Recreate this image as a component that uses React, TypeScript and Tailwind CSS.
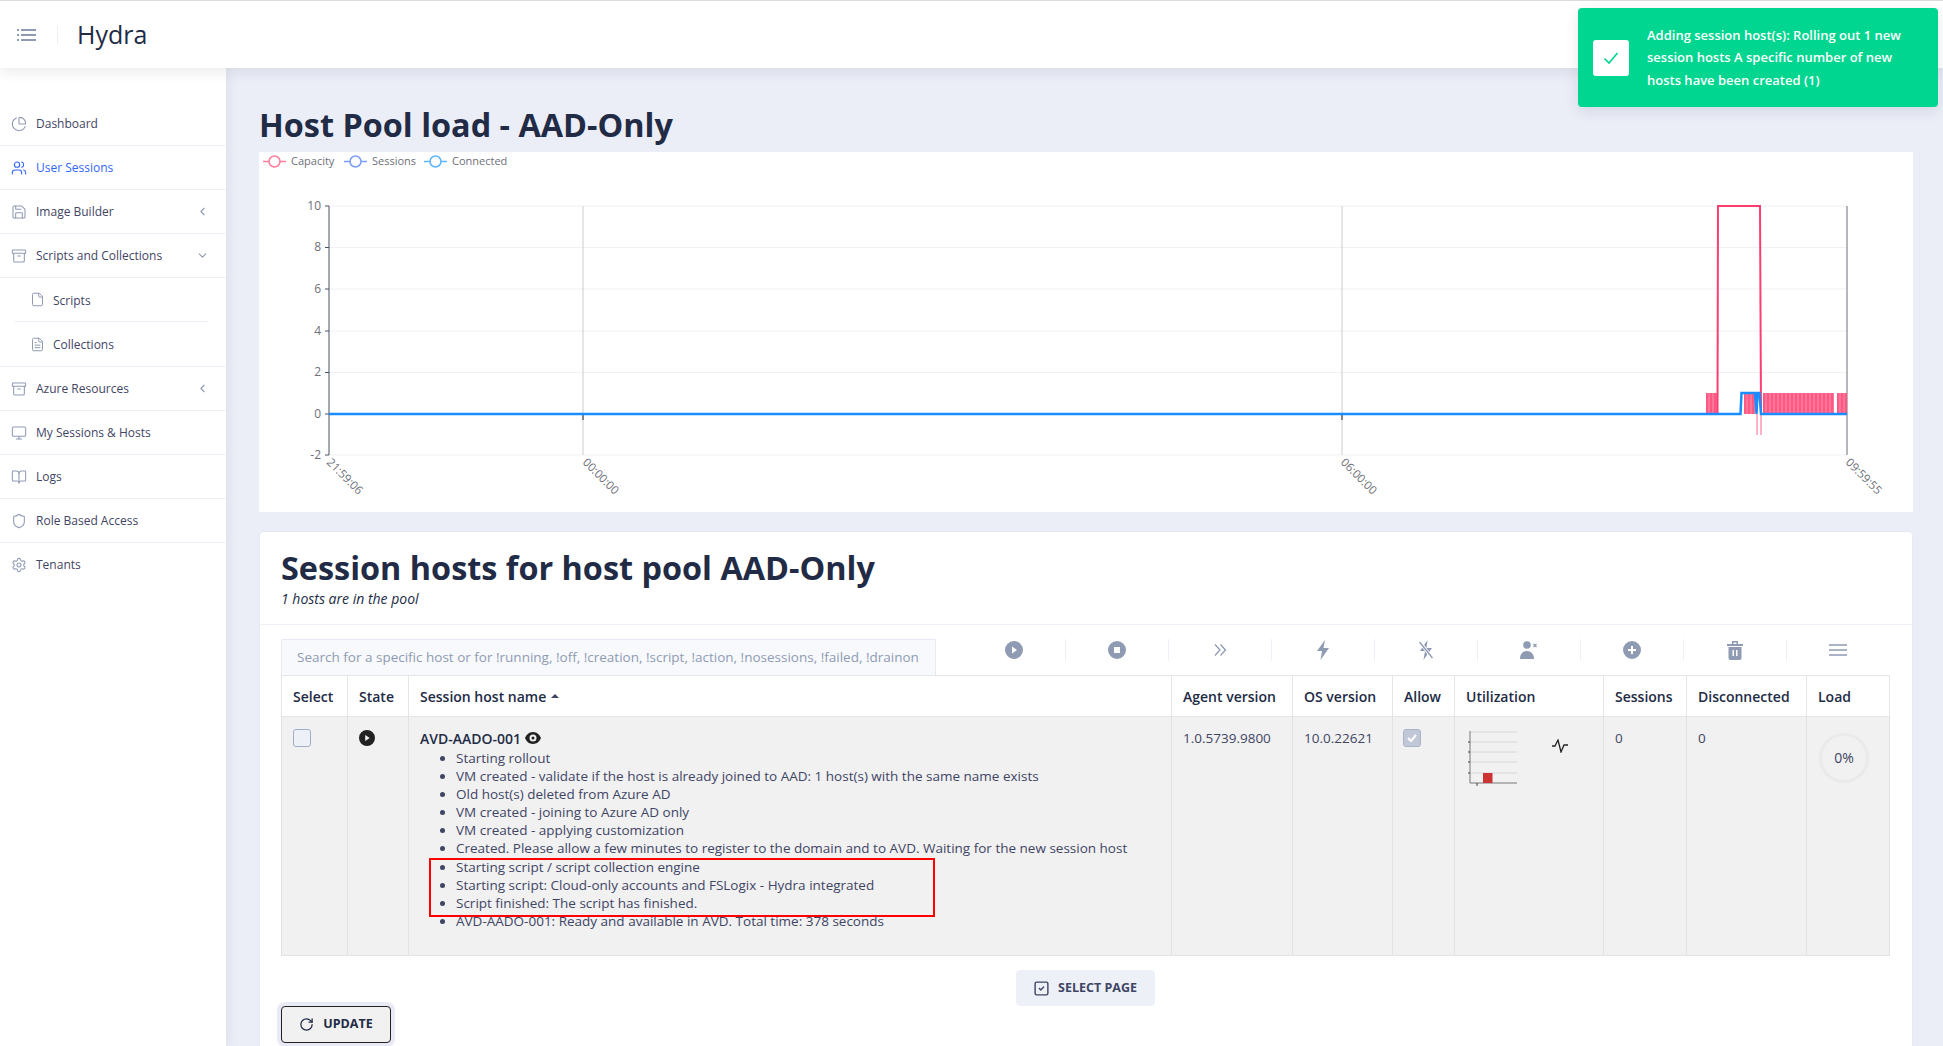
import React from "react";
import {
  Archive,
  BookOpen,
  ChevronDown,
  ChevronLeft,
  File,
  FileText,
  Monitor,
  PieChart,
  RotateCw,
  Save,
  Settings,
  Shield,
  SquareCheck,
  Users,
} from "lucide-react";

const navItemClass = "flex h-[44px] items-center border-b border-[#edf1f7] pl-[11px] pr-[17px]";

const NavItem = ({ icon: Icon, label, active, arrow }: any) => (
  <div className={navItemClass}>
    <Icon size={16} strokeWidth={1.6} className={active ? "text-[#3366ff]" : "text-[#8f9bb3]"} />
    <span className={`ml-[9px] flex-1 text-[12px] font-medium ${active ? "text-[#3366ff]" : "text-[#3f4565]"}`}>{label}</span>
    {arrow === "left" && <ChevronLeft size={13} className="text-[#8f9bb3]" />}
    {arrow === "down" && <ChevronDown size={13} className="text-[#8f9bb3]" />}
  </div>
);

const SubItem = ({ icon: Icon, label, last }: any) => (
  <div className={`ml-[14px] mr-[18px] flex h-[44px] items-center pl-[16px] ${last ? "" : "border-b border-[#edf1f7]"}`}>
    <Icon size={15} strokeWidth={1.6} className="text-[#8f9bb3]" />
    <span className="ml-[8px] translate-y-[1px] text-[12px] font-medium text-[#3f4565]">{label}</span>
  </div>
);

const Sidebar = () => (
  <div className="relative z-0 w-[226px] shrink-0 bg-white pt-[34px] shadow-[0_0_12px_rgba(44,51,73,0.1)]">
    <NavItem icon={PieChart} label="Dashboard" />
    <NavItem icon={Users} label="User Sessions" active />
    <NavItem icon={Save} label="Image Builder" arrow="left" />
    <NavItem icon={Archive} label="Scripts and Collections" arrow="down" />
    <SubItem icon={File} label="Scripts" />
    <SubItem icon={FileText} label="Collections" last />
    <div className="border-b border-[#edf1f7]" />
    <NavItem icon={Archive} label="Azure Resources" arrow="left" />
    <NavItem icon={Monitor} label="My Sessions & Hosts" />
    <NavItem icon={BookOpen} label="Logs" />
    <NavItem icon={Shield} label="Role Based Access" />
    <div className={navItemClass + " border-b-0"}>
      <Settings size={16} strokeWidth={1.6} className="text-[#8f9bb3]" />
      <span className="ml-[9px] text-[12px] font-medium text-[#3f4565]">Tenants</span>
    </div>
  </div>
);

const Header = () => (
  <div className="relative z-10 flex h-[68px] shrink-0 items-center border-t border-[#dcdcdc] bg-white shadow-[0_2px_14px_rgba(44,51,73,0.12)]">
    <svg width="20" height="14" viewBox="0 0 20 14" className="ml-[17px] text-[#8f9bb3]" fill="none" stroke="currentColor" strokeWidth="2">
      <path d="M0 2h2M4 2h15M0 7h2M4 7h15M0 12h2M4 12h15" />
    </svg>
    <div className="ml-[20px] h-[18px] w-px bg-[#edf1f7]" />
    <span className="ml-[19px] text-[25px] text-[#222b45]">Hydra</span>
  </div>
);

const Toast = () => (
  <div className="absolute left-[1578px] top-[8px] z-20 flex h-[99px] w-[360px] items-center rounded-[4px] bg-[#00d68f] pl-[15px] pr-[14px] shadow-[0_4px_14px_rgba(44,51,73,0.12)]">
    <div className="flex h-[36px] w-[36px] shrink-0 items-center justify-center rounded-[3px] bg-white">
      <svg width="16" height="14" viewBox="0 0 16 14" fill="none" stroke="#00d68f" strokeWidth="1.6">
        <path d="M1.5 7.5l4.5 4.5 8.500-10" />
      </svg>
    </div>
    <p className="ml-[18px] text-[13px] font-semibold leading-[22.500px] text-white">
      Adding session host(s): Rolling out 1 new session hosts A specific number of new hosts have been created (1)
    </p>
  </div>
);

const stripes = (from: number, to: number) => {
  const out = [];
  for (let x = from; x < to; x += 4) out.push(x);
  return out;
};

const HostChart = () => (
  <svg viewBox="259 152 1654 360" width="1654" height="360" className="block bg-white" fontFamily="'Open Sans', sans-serif">
    {[
      { c: "#ff7c9c", x: 263, t: "Capacity" },
      { c: "#7c9cff", x: 344, t: "Sessions" },
      { c: "#5cb5ff", x: 424, t: "Connected" },
    ].map((l) => (
      <g key={l.t}>
        <path d={`M${l.x} 161.500h23`} stroke={l.c} strokeWidth="1.500" />
        <circle cx={l.x + 11.500} cy="161.500" r="5.500" fill="#fff" stroke={l.c} strokeWidth="1.500" />
        <text x={l.x + 28} y="164.500" fontSize="11" fill="#6e7079">{l.t}</text>
      </g>
    ))}
    {[206, 247.500, 289, 331, 372.500, 455].map((y) => (
      <path key={y} d={`M329 ${y}H1847`} stroke="#f0f1f6" strokeWidth="1" />
    ))}
    <path d="M583 206V455M1342 206V455" stroke="#cccccc" strokeWidth="1" />
    <path d="M329 206V455M325 206h4M325 247.500h4M325 289h4M325 331h4M325 372.500h4M325 414h4M325 455h4" stroke="#4a4e63" strokeWidth="1" />
    <path d="M1847 206V455" stroke="#6e7079" strokeWidth="1" />
    <path d="M583 414v6M1342 414v6" stroke="#222222" strokeWidth="1" />
    {[
      ["10", 210],
      ["8", 250.500],
      ["6", 292.500],
      ["4", 334.500],
      ["2", 376],
      ["0", 417.500],
      ["-2", 459],
    ].map(([t, y]) => (
      <text key={t} x="321" y={y} textAnchor="end" fontSize="12" fill="#6e7079">{t}</text>
    ))}
    {[
      ["21:59:06", 326, 463],
      ["00:00:00", 582, 463],
      ["06:00:00", 1340, 463],
      ["09:59:55", 1845, 463],
    ].map(([t, x, y]) => (
      <text key={t} x={x} y={y} fontSize="11.500" fill="#6e7079" transform={`rotate(45 ${x} ${y})`}>{t}</text>
    ))}
    <rect x="1706" y="393" width="12" height="21" fill="#ff7598" />
    <rect x="1744" y="393" width="11" height="21" fill="#ff7598" />
    <rect x="1763" y="393" width="71" height="21" fill="#ff7598" />
    <rect x="1837" y="393" width="10" height="21" fill="#ff7598" />
    {[...stripes(1706, 1718), ...stripes(1744, 1755), ...stripes(1763, 1834), ...stripes(1837, 1847)].map((x) => (
      <path key={x} d={`M${x + 1} 393v21`} stroke="#ff3d71" strokeWidth="1" />
    ))}
    <path d="M1717.500 414L1718 206H1760L1761 414" fill="none" stroke="#ff3d71" strokeWidth="2" />
    <path d="M1757 414v21M1761 414v21" stroke="#ff98b3" strokeWidth="1.500" />
    <path d="M329 414H1740.500L1741.500 393H1755L1756.500 414L1757.500 393H1759.500L1761 414H1847" fill="none" stroke="#1a8cff" strokeWidth="2.500" />
  </svg>
);

const iconColor = "#8f9bb3";

const toolbarIcons = [
  <svg key="play" width="18" height="18" viewBox="0 0 18 18">
    <path fillRule="evenodd" fill={iconColor} d="M9 0a9 9 0 1 0 0 18A9 9 0 0 0 9 0zM7 5.500v7l5-3.500z" />
  </svg>,
  <svg key="stop" width="18" height="18" viewBox="0 0 18 18">
    <path fillRule="evenodd" fill={iconColor} d="M9 0a9 9 0 1 0 0 18A9 9 0 0 0 9 0zM6 6h6v6H6z" />
  </svg>,
  <svg key="forward" width="16" height="16" viewBox="0 0 16 16" fill="none" stroke={iconColor} strokeWidth="1.300">
    <path d="M3 2.500l5 5.500-5 5.500M8.500 2.500l5 5.500-5 5.500" />
  </svg>,
  <svg key="flash" width="16" height="20" viewBox="0 0 16 20">
    <path fill={iconColor} d="M10 0L2 11h5l-1.500 9L14 8H8.500z" />
  </svg>,
  <svg key="flash-off" width="18" height="20" viewBox="0 0 18 20">
    <path fill={iconColor} d="M10.500 0L3 11h5l-1.500 9L15 8H9.500z" />
    <path d="M3 2l12 16" stroke="#fff" strokeWidth="3" />
    <path d="M2.500 2l13 16" stroke={iconColor} strokeWidth="1.400" />
  </svg>,
  <svg key="person-remove" width="20" height="18" viewBox="0 0 20 18">
    <circle cx="8" cy="4" r="3.800" fill={iconColor} />
    <path fill={iconColor} d="M1 18c0-5 3-8 7-8s7 3 7 8z" />
    <path d="M14.500 3l3 3M17.500 3l-3 3" stroke={iconColor} strokeWidth="1.300" />
  </svg>,
  <svg key="plus" width="18" height="18" viewBox="0 0 18 18">
    <path fillRule="evenodd" fill={iconColor} d="M9 0a9 9 0 1 0 0 18A9 9 0 0 0 9 0zM8 5h2v3h3v2h-3v3H8v-3H5V8h3z" />
  </svg>,
  <svg key="trash" width="18" height="19" viewBox="0 0 18 19">
    <path fillRule="evenodd" fill={iconColor} d="M6 0h6v3h5v2H1V3h5zM7.500 1.500v1.500h3V1.500zM2.500 6h13v11a2 2 0 0 1-2 2h-9a2 2 0 0 1-2-2zM6.500 9v6h1.500V9zM10 9v6h1.500V9z" />
  </svg>,
  <svg key="menu" width="18" height="14" viewBox="0 0 18 14" fill="none" stroke={iconColor} strokeWidth="1.500">
    <path d="M0 2h18M0 7h18M0 12h18" />
  </svg>,
];

const logLines = [
  "Starting rollout",
  "VM created - validate if the host is already joined to AAD: 1 host(s) with the same name exists",
  "Old host(s) deleted from Azure AD",
  "VM created - joining to Azure AD only",
  "VM created - applying customization",
  "Created. Please allow a few minutes to register to the domain and to AVD. Waiting for the new session host",
  "Starting script / script collection engine",
  "Starting script: Cloud-only accounts and FSLogix - Hydra integrated",
  "Script finished: The script has finished.",
  "AVD-AADO-001: Ready and available in AVD. Total time: 378 seconds",
];

const thClass = "border border-[#e4e6ea] px-[11px] text-left text-[14px] font-semibold text-[#222b45]";
const tdClass = "border border-[#e0e2e6] px-[11px] align-top text-[13.500px] leading-[18px] text-[#3f4565]";

const HostTable = () => (
  <table className="w-[1608px] table-fixed border-collapse">
    <colgroup>
      <col className="w-[66px]" />
      <col className="w-[61px]" />
      <col className="w-[763px]" />
      <col className="w-[121px]" />
      <col className="w-[100px]" />
      <col className="w-[62px]" />
      <col className="w-[149px]" />
      <col className="w-[83px]" />
      <col className="w-[120px]" />
      <col className="w-[83px]" />
    </colgroup>
    <thead>
      <tr className="h-[41px]">
        <th className={thClass}>Select</th>
        <th className={thClass}>State</th>
        <th className={thClass}>
          Session host name <span className="ml-[1px] inline-block translate-y-[-2px] border-x-[4px] border-b-[4px] border-x-transparent border-b-[#3f4565] align-middle" />
        </th>
        <th className={thClass}>Agent version</th>
        <th className={thClass}>OS version</th>
        <th className={thClass}>Allow</th>
        <th className={thClass}>Utilization</th>
        <th className={thClass}>Sessions</th>
        <th className={thClass}>Disconnected</th>
        <th className={thClass}>Load</th>
      </tr>
    </thead>
    <tbody>
      <tr className="h-[239px] bg-[#f1f1f1]">
        <td className={tdClass + " pt-[12px]"}>
          <div className="h-[18px] w-[18px] rounded-[3px] border border-[#a0aec8] bg-[#edf1f7]" />
        </td>
        <td className={tdClass + " pt-[12px]"}>
          <svg width="16" height="16" viewBox="0 0 18 18" className="mt-[1px]">
            <path fillRule="evenodd" fill="#222222" d="M9 0a9 9 0 1 0 0 18A9 9 0 0 0 9 0zM7 5.500v7l5-3.500z" />
          </svg>
        </td>
        <td className={tdClass + " pt-[13px]"}>
          <div className="flex items-center text-[14px] font-semibold text-[#222b45]">
            AVD-AADO-001
            <svg width="16" height="12" viewBox="0 0 16 12" className="ml-[4px] -translate-y-[1px]">
              <path fillRule="evenodd" fill="#222222" d="M8 0C4 0 1.200 3 0 6c1.200 3 4 6 8 6s6.800-3 8-6c-1.200-3-4-6-8-6zM8 2.500a3.500 3.500 0 1 1 0 7 3.500 3.500 0 0 1 0-7zM8 4.500a1.500 1.500 0 1 0 0 3 1.500 1.500 0 0 0 0-3z" />
            </svg>
          </div>
          <ul className="mt-[1px] list-disc pl-[36px]">
            {logLines.map((l) => (
              <li key={l} className="leading-[18.100px]">{l}</li>
            ))}
          </ul>
        </td>
        <td className={tdClass + " pt-[12px]"}>1.0.5739.9800</td>
        <td className={tdClass + " pt-[12px]"}>10.0.22621</td>
        <td className={tdClass + " pt-[12px] pl-[10px]"}>
          <div className="flex h-[18px] w-[18px] items-center justify-center rounded-[3px] border border-[#a9b4cb] bg-[#c0c8d8]">
            <svg width="10" height="8" viewBox="0 0 10 8" fill="none" stroke="#fff" strokeWidth="2">
              <path d="M1 4l3 3 5-6" />
            </svg>
          </div>
        </td>
        <td className={tdClass + " pt-[14px] pl-[13px]"}>
          <div className="flex items-start">
            <svg width="50" height="56" viewBox="0 0 50 56">
              <path d="M2 1h47M2 11h47M2 21h47M2 31h47M2 42h47" stroke="#d6d6d6" strokeWidth="1" />
              <path d="M2 0V52H49" fill="none" stroke="#777777" strokeWidth="1" />
              <path d="M0 11h2M0 21h2M0 31h2M0 42h2M9 52v3" stroke="#444444" strokeWidth="1" />
              <rect x="15" y="42" width="9.500" height="10" fill="#cc3333" />
            </svg>
            <svg width="16" height="14" viewBox="0 0 16 14" fill="none" stroke="#222222" strokeWidth="1.300" className="ml-[34px] mt-[8px]">
              <path d="M0 7h3l3-6 3 12 3-7h4" />
            </svg>
          </div>
        </td>
        <td className={tdClass + " pt-[12px]"}>0</td>
        <td className={tdClass + " pt-[12px]"}>0</td>
        <td className={tdClass + " pt-[16px] pl-[12px]"}>
          <div className="flex h-[50px] w-[50px] items-center justify-center rounded-full border-[3px] border-[#eaeaec] text-[14px]">0%</div>
        </td>
      </tr>
    </tbody>
  </table>
);

const SessionCard = () => (
  <div className="mt-[19px] rounded-t-[4px] border border-[#e4e9f2] bg-white">
    <div className="border-b border-[#edf1f7] px-[21px] pb-[16px] pt-[13px]">
      <h2 className="text-[32.400px] font-bold leading-[44px] text-[#222b45]">Session hosts for host pool AAD-Only</h2>
      <p className="mt-[1px] text-[14px] font-medium italic leading-[18px] text-[#222b45]">1 hosts are in the pool</p>
    </div>
    <div className="px-[21px] pb-[200px] pt-[14px]">
      <div className="flex items-start">
        <div className="flex h-[36px] w-[655px] items-center whitespace-nowrap rounded-t-[2px] border border-b-0 border-[#e4e9f2] bg-[#f7f9fc] pl-[15px] text-[13.500px] text-[#8f9bb3]">
          Search for a specific host or for !running, !off, !creation, !script, !action, !nosessions, !failed, !drainon
        </div>
        <div className="ml-[26px] flex">
          {toolbarIcons.map((icon, i) => (
            <div key={i} className={`flex h-[22px] w-[103px] items-center justify-center ${i ? "border-l border-[#edf1f7]" : ""}`}>
              {icon}
            </div>
          ))}
        </div>
      </div>
      <div className="relative">
        <HostTable />
        <div className="absolute left-[148px] top-[183px] h-[59px] w-[506px] border-[2.500px] border-[#ff0000]" />
      </div>
      <div className="mt-[14px] flex w-[1608px] justify-center">
        <button className="flex h-[36px] w-[139px] items-center justify-center rounded-[4px] bg-[#edf1f7] text-[12.500px] font-bold text-[#3f4565]">
          <SquareCheck size={17} strokeWidth={2} className="mr-[8px]" />
          SELECT PAGE
        </button>
      </div>
      <button className="flex h-[37px] w-[110px] items-center justify-center rounded-[4px] border border-[#222222] bg-[#f1f1f1] text-[12.500px] font-bold text-[#222b45] shadow-[0_0_0_4px_#e8ebf3]">
        <RotateCw size={15} strokeWidth={2} className="mr-[9px]" />
        UPDATE
      </button>
    </div>
  </div>
);

export default function App() {
  return (
    <div className="relative flex h-screen flex-col overflow-hidden bg-[#ebeef7] font-['Open_Sans',sans-serif]">
      <Header />
      <Toast />
      <div className="flex min-h-0 flex-1">
        <Sidebar />
        <main className="min-w-0 flex-1 overflow-hidden pl-[33px] pr-[30px]">
          <h1 className="pb-[2px] pt-[30px] text-[32.400px] font-bold leading-[52px] text-[#222b45]">Host Pool load - AAD-Only</h1>
          <HostChart />
          <SessionCard />
        </main>
      </div>
    </div>
  );
}
